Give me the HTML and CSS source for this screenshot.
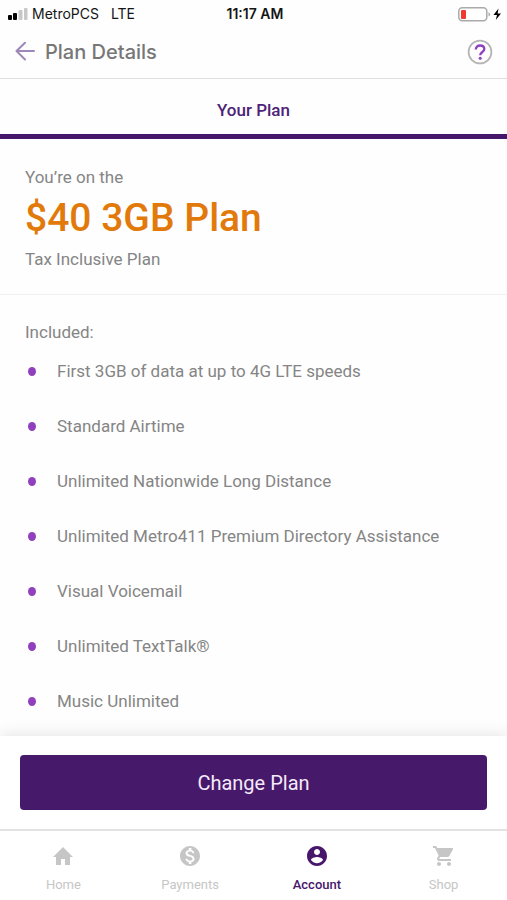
FILE: index.html
```html
<!DOCTYPE html>
<html lang="en">
<head>
<meta charset="utf-8">
<meta name="viewport" content="width=device-width, initial-scale=1">
<title>Plan Details</title>
<link rel="stylesheet" href="styles.css">
</head>
<body>
<div class="status">
  <div class="carrier">
    <svg width="20" height="14" viewBox="0 0 20 14" aria-hidden="true"><rect y="8" width="4" height="5" rx="1"/><rect x="5" y="6" width="4" height="7" rx="1"/><rect x="10.5" y="3" width="4" height="10" rx="1" fill="#c8c8c8"/><rect x="16" y="1" width="3.5" height="12" rx="1" fill="#c8c8c8"/></svg>
    <span>MetroPCS</span><span class="network">LTE</span>
  </div>
  <time class="clock">11:17 AM</time>
  <svg class="battery" width="44" height="16" viewBox="0 0 44 16" aria-hidden="true"><rect x=".8" y="1.8" width="28" height="13" rx="3.5" fill="#fff" stroke="#aaa" stroke-width="1.5"/><rect x="3" y="4" width="5" height="9" rx="1" fill="#f03a30"/><path d="M30.5 6.2Q34 8.3 30.5 10.6Z" fill="#aaa"/><path d="M40.5 2.5 35.5 9H39L37.8 14 43 7.5H39.6Z"/></svg>
</div>
<header class="header">
  <button class="icon-button" type="button" aria-label="Back"><svg width="20" height="20" viewBox="0 0 20 20" fill="none" stroke="#9d88b9" stroke-width="2" stroke-linecap="round" stroke-linejoin="round"><path d="M19 9H1.500M10 .8 1.500 9 10 17.500"/></svg></button>
  <h1>Plan Details</h1>
  <button class="icon-button" type="button" aria-label="Help"><svg width="26" height="26" viewBox="0 0 26 26" fill="none"><circle cx="13" cy="13" r="11.4" stroke="#b5b5b5" stroke-width="1.8"/><path d="M8.800 10.500C8.800 7.900 10.500 6.500 13.100 6.500S17.300 8 17.300 10.100C17.300 12.900 13.200 13.100 13.200 16.200" stroke="#8f3fc0" stroke-width="2.300"/><circle cx="13.200" cy="19.200" r="1.500" fill="#8f3fc0"/></svg></button>
</header>
<div class="tabs"><a href="#plan" aria-current="true">Your Plan</a></div>
<main id="plan">
  <section class="summary">
    <p>You’re on the</p>
    <h2>$40 3GB Plan</h2>
    <p>Tax Inclusive Plan</p>
  </section>
  <section class="included">
    <p>Included:</p>
    <ul>
      <li>First 3GB of data at up to 4G LTE speeds</li>
      <li>Standard Airtime</li>
      <li>Unlimited Nationwide Long Distance</li>
      <li>Unlimited Metro411 Premium Directory Assistance</li>
      <li>Visual Voicemail</li>
      <li>Unlimited TextTalk®</li>
      <li>Music Unlimited</li>
    </ul>
  </section>
</main>
<footer class="footer">
  <div class="action"><button class="change" type="button">Change Plan</button></div>
  <nav class="nav">
    <a href="#home"><svg width="24" height="24" viewBox="0 0 24 24" fill="currentColor" aria-hidden="true"><path d="M10 21v-6h4v6h5v-8h3L12 3 2 13h3v8z"/></svg>Home</a>
    <a href="#payments"><svg width="24" height="24" viewBox="0 0 24 24" fill="currentColor" aria-hidden="true"><path d="M12 2C6.48 2 2 6.48 2 12s4.48 10 10 10 10-4.48 10-10S17.520 2 12 2zm1.410 16.090V20h-2.670v-1.930c-1.710-.36-3.160-1.460-3.270-3.400h1.960c.1 1.050.82 1.870 2.650 1.870 1.960 0 2.400-.98 2.400-1.590 0-.83-.44-1.610-2.670-2.140-2.480-.6-4.180-1.620-4.180-3.670 0-1.720 1.390-2.840 3.110-3.210V4h2.670v1.950c1.860.45 2.790 1.860 2.850 3.390H14.300c-.05-1.110-.64-1.870-2.220-1.870-1.500 0-2.400.68-2.400 1.640 0 .84.65 1.390 2.670 1.910s4.180 1.390 4.180 3.910c-.01 1.830-1.380 2.830-3.120 3.160z"/></svg>Payments</a>
    <a class="active" href="#account" aria-current="page"><svg width="24" height="24" viewBox="0 0 24 24" fill="currentColor" aria-hidden="true"><path d="M12 2C6.480 2 2 6.480 2 12s4.480 10 10 10 10-4.480 10-10S17.520 2 12 2zm0 3c1.660 0 3 1.340 3 3s-1.340 3-3 3-3-1.340-3-3 1.340-3 3-3zm0 14.200c-2.500 0-4.710-1.280-6-3.220.03-1.990 4-3.080 6-3.080 1.990 0 5.970 1.090 6 3.080-1.290 1.940-3.500 3.220-6 3.220z"/></svg>Account</a>
    <a href="#shop"><svg width="24" height="24" viewBox="0 0 24 24" fill="currentColor" aria-hidden="true"><path d="M7 18c-1.100 0-1.990.9-1.990 2S5.900 22 7 22s2-.9 2-2-.9-2-2-2zM1 2v2h2l3.600 7.590-1.350 2.450c-.16.28-.25.61-.25.96 0 1.100.9 2 2 2h12v-2H7.420c-.14 0-.25-.11-.25-.25l.03-.12.9-1.630h7.450c.75 0 1.410-.41 1.750-1.030l3.580-6.490A1.003 1.003 0 0 0 20 4H5.210l-.94-2H1zm16 16c-1.100 0-1.990.9-1.990 2s.89 2 1.990 2 2-.9 2-2-.9-2-2-2z"/></svg>Shop</a>
  </nav>
</footer>
</body>
</html>
```
FILE: styles.css
```css
* { box-sizing: border-box; }
body {
  display: flex;
  flex-direction: column;
  min-height: 100vh;
  margin: 0;
  background: #fefefe;
  color: #858585;
  font: 17px/24px Roboto, sans-serif;
}
h1, h2, p, ul { margin: 0; padding: 0; }
button { border: 0; cursor: pointer; }
a { text-decoration: none; }
svg { display: block; }

.status {
  display: grid;
  grid-template-columns: 1fr auto 1fr;
  align-items: center;
  height: 28px;
  padding: 0 5px 0 8px;
  color: #151515;
  font: 14px/28px Inter, sans-serif;
}
.carrier { display: flex; align-items: center; gap: 4px; }
.network { margin-left: 8px; }
.clock { font-weight: 600; }
.battery { justify-self: end; }

.header {
  display: flex;
  align-items: center;
  gap: 10px;
  height: 51px;
  padding: 0 14px 2px 15px;
  border-bottom: 1px solid #dedede;
}
.header h1 {
  flex: 1;
  color: #777;
  font: 500 20px/28px Inter, sans-serif;
}
.icon-button { padding: 0; background: none; }

.tabs { display: flex; border-bottom: 5px solid #47176b; }
.tabs a {
  flex: 1;
  padding: 19px 0 12px;
  color: #4d2277;
  font-weight: 500;
  text-align: center;
}

.summary { padding: 26px 25px 23px; border-bottom: 1px solid #f1f1f1; }
.summary h2 {
  margin: 5px 0;
  color: #e17a0b;
  font-size: 39px;
  font-weight: 500;
  line-height: 48px;
}
.included { padding: 25px 25px 0; }
.included ul {
  display: grid;
  gap: 31px;
  margin-top: 15px;
  list-style: none;
}
.included li {
  display: flex;
  align-items: center;
  gap: 21px;
}
.included li::before {
  flex: none;
  width: 8px;
  height: 9px;
  margin-left: 3px;
  border-radius: 50%;
  background: #9140bd;
  content: "";
}

.footer {
  position: sticky;
  bottom: 0;
  margin-top: auto;
  background: #fff;
  box-shadow: 0 0 16px rgba(0, 0, 0, 0.12);
}
.action { padding: 19px 20px; border-bottom: 2px solid #e2e2e2; }
.change {
  display: block;
  width: 100%;
  height: 55px;
  border-radius: 4px;
  background: #47196b;
  color: #f5eafa;
  font: 20px/24px Roboto, sans-serif;
}
.nav {
  display: grid;
  grid-template-columns: repeat(4, 1fr);
  height: 69px;
  padding-top: 13px;
}
.nav a {
  display: flex;
  flex-direction: column;
  align-items: center;
  gap: 7px;
  color: #c6c6c6;
  font-size: 13px;
  line-height: 20px;
}
.nav .active { color: #47176b; font-weight: 500; }
```
